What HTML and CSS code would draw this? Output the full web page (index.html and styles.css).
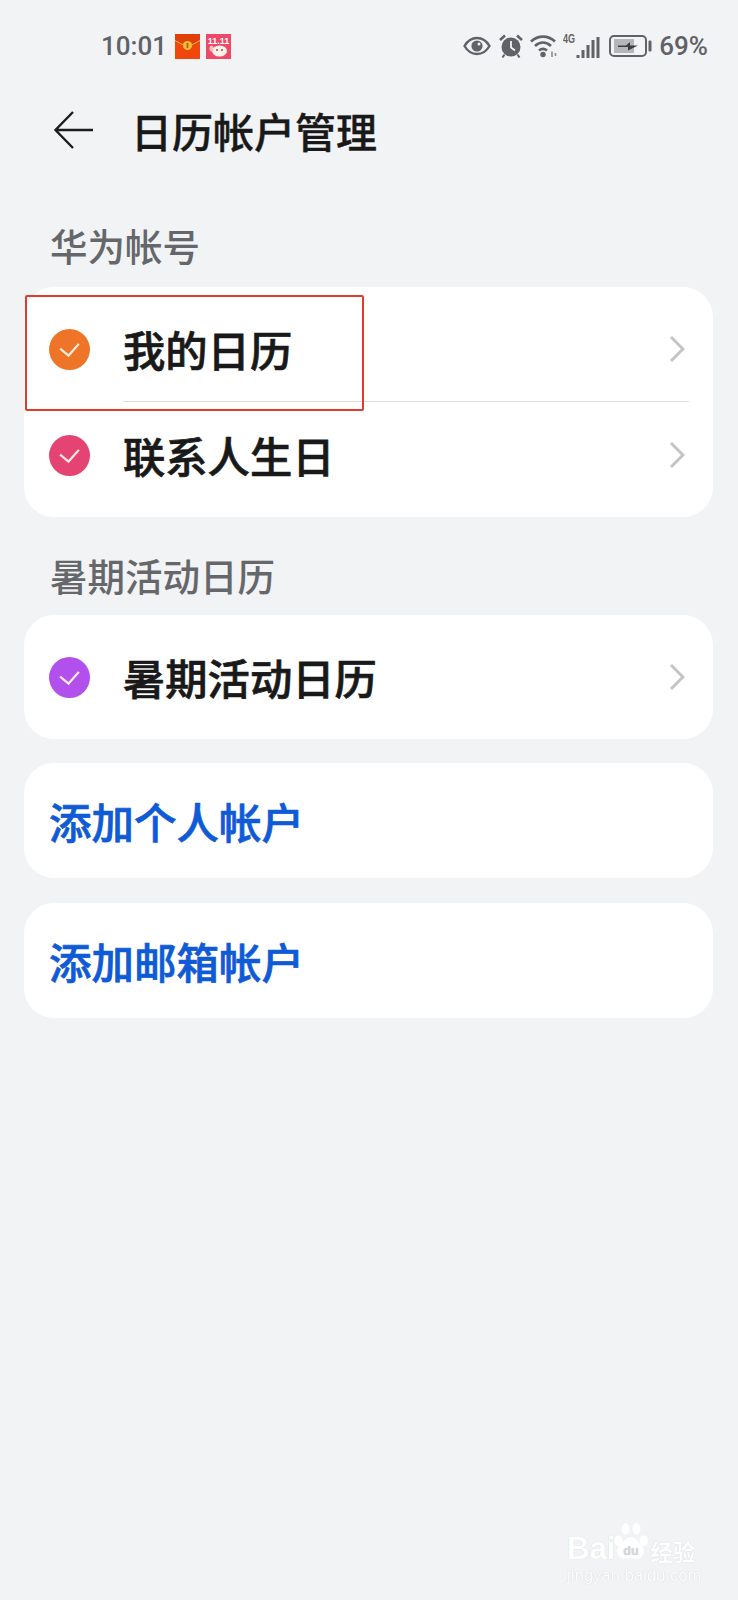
FILE: index.html
```html
<!DOCTYPE html>
<html lang="zh-CN">
<head>
    <meta charset="UTF-8">
    <meta name="viewport" content="width=device-width, initial-scale=1.0">
    <title>日历帐户管理</title>
    <link rel="stylesheet" href="styles.css">
</head>
<body>
    <div class="statusbar">
        <div class="status-left">
            <span class="time">10:01</span>
            <svg class="notif" viewBox="0 0 25 25">
                <rect width="25" height="25" fill="#f0480c"/>
                <path d="M0 0H25V6.500L14 12.500H11L0 6.500Z" fill="#e2400a"/>
                <path d="M0 6.500L11 12.500M25 6.500L14 12.500" fill="none" stroke="#ffb25e" stroke-width="1"/>
                <circle cx="12.500" cy="11.500" r="4.500" fill="#f8bf34"/>
                <rect x="11.600" y="9" width="1.800" height="5" fill="#b4600c"/>
            </svg>
            <svg class="notif" viewBox="0 0 25 25">
                <rect width="25" height="25" fill="#ee4a68"/>
                <text class="notif-text" x="12.500" y="10">11.11</text>
                <ellipse cx="13.500" cy="17" rx="7.500" ry="5.500" fill="#fdf1ea"/>
                <ellipse cx="5.500" cy="14.500" rx="2" ry="3" fill="#f7c5b8"/>
                <circle cx="11" cy="16" r="1" fill="#9a4a3e"/>
                <circle cx="16" cy="16" r="1" fill="#9a4a3e"/>
            </svg>
        </div>
        <div class="status-right">
            <svg class="ic-eye" viewBox="0 0 28 20">
                <path d="M1.500 10C5 4 9 2 14 2s9 2 12.500 8C23 16 19 18 14 18S5 16 1.500 10Z" fill="none" stroke="#5f6266" stroke-width="2.400"/>
                <circle cx="14" cy="10" r="5.600" fill="#5f6266"/>
                <circle cx="16" cy="8" r="1.500" fill="#f2f3f5"/>
            </svg>
            <svg class="ic-alarm" viewBox="0 0 24 24">
                <circle cx="12" cy="13" r="9.500" fill="#5f6266"/>
                <path d="M12 7v6.500l4 3" fill="none" stroke="#f2f3f5" stroke-width="1.800"/>
                <path d="M1 6l5-4.500M23 6l-5-4.500" stroke="#5f6266" stroke-width="2.600"/>
                <path d="M5.500 20.500l-2 3M18.500 20.500l2 3" stroke="#5f6266" stroke-width="2"/>
            </svg>
            <svg class="ic-wifi" viewBox="0 0 28 24">
                <path d="M1 7.500C8 1 18 1 25 7.500M5 12c5-4.500 11-4.500 16 0M9 16.500c3-2.400 5-2.400 8 0" fill="none" stroke="#5f6266" stroke-width="2.600"/>
                <circle cx="13" cy="20.500" r="2.700" fill="#5f6266"/>
                <path d="M22 17.500v5.500M25.500 19v3" stroke="#8a8d90" stroke-width="1.600"/>
            </svg>
            <div class="signal">
                <span class="net">4G</span>
                <svg class="ic-bars" viewBox="0 0 24 24">
                    <path d="M2 20v3M7 15v8M12 10v13M17 5v18M22 2v21" stroke="#5f6266" stroke-width="3"/>
                </svg>
            </div>
            <svg class="ic-batt" viewBox="0 0 44 24">
                <rect x="1" y="2" width="36" height="20" rx="4" fill="none" stroke="#5f6266" stroke-width="2"/>
                <rect x="5" y="5" width="20" height="14" fill="#b4b6b9"/>
                <path d="M9 11.500h8l4-3.500v3.500h8l-10 5v-3.500H9Z" fill="#3c3e41"/>
                <rect x="39.500" y="6.500" width="3" height="11" rx="1.200" fill="#5f6266"/>
            </svg>
            <span class="percent">69%</span>
        </div>
    </div>

    <div class="topbar">
        <svg class="back" viewBox="0 0 42 38">
            <path d="M40 19H3M20 1L2.500 19L20 37" fill="none" stroke="#1c1c1e" stroke-width="2.400"/>
        </svg>
        <h1>日历帐户管理</h1>
    </div>

    <div class="section-label first">华为帐号</div>
    <div class="card double">
        <div class="row">
            <span class="dot orange"><svg viewBox="0 0 24 16"><path d="M2 7L11 14.500L22 2"/></svg></span>
            <span class="row-name">我的日历</span>
            <svg class="chev" viewBox="0 0 16 28"><path d="M2 2l12 12L2 26"/></svg>
        </div>
        <div class="row">
            <span class="dot pink"><svg viewBox="0 0 24 16"><path d="M2 7L11 14.500L22 2"/></svg></span>
            <span class="row-name">联系人生日</span>
            <svg class="chev" viewBox="0 0 16 28"><path d="M2 2l12 12L2 26"/></svg>
        </div>
    </div>

    <div class="section-label">暑期活动日历</div>
    <div class="card">
        <div class="row single">
            <span class="dot purple"><svg viewBox="0 0 24 16"><path d="M2 7L11 14.500L22 2"/></svg></span>
            <span class="row-name">暑期活动日历</span>
            <svg class="chev" viewBox="0 0 16 28"><path d="M2 2l12 12L2 26"/></svg>
        </div>
    </div>

    <div class="card link-card">添加个人帐户</div>
    <div class="card link-card">添加邮箱帐户</div>

    <div class="highlight"></div>

    <div class="watermark">
        <div class="wm-top">
            <span class="wm-bai">Bai</span>
            <svg class="wm-paw" viewBox="0 0 42 44">
                <ellipse cx="7" cy="20" rx="4.500" ry="6" fill="#fff"/>
                <ellipse cx="15" cy="7" rx="4.500" ry="6.500" fill="#fff"/>
                <ellipse cx="27" cy="7" rx="4.500" ry="6.500" fill="#fff"/>
                <ellipse cx="35" cy="20" rx="4.500" ry="6" fill="#fff"/>
                <path d="M21 16c6 0 8 6 12 10 5 6 1 15-6 14-3 0-4-1-6-1s-4 1-7 1c-7 0-11-8-6-14 4-4 7-10 13-10Z" fill="#fff"/>
                <text class="wm-du" x="21" y="36">du</text>
            </svg>
            <span class="wm-cn">经验</span>
        </div>
        <div class="wm-url">jingyan.baidu.com</div>
    </div>
</body>
</html>
```

FILE: styles.css
```css
* {
    box-sizing: border-box;
}
html, body {
    margin: 0;
    height: 1600px;
    overflow: hidden;
}
body {
    position: relative;
    background-color: #f2f3f5;
    font-family: "Noto Sans CJK SC", "Noto Sans", sans-serif;
    color: #191919;
}

/* status bar */
.statusbar {
    height: 90px;
    padding: 33px 30px 0 101px;
    display: flex;
    justify-content: space-between;
    align-items: flex-start;
    color: #5f6266;
}
.status-left {
    display: flex;
    align-items: center;
    gap: 6px;
    height: 26px;
}
.time {
    font-family: Roboto, sans-serif;
    font-size: 26px;
    font-weight: 500;
    margin-right: 2px;
}
.notif {
    width: 25px;
    height: 25px;
}
.notif-text {
    font-family: "Liberation Sans", sans-serif;
    font-size: 9px;
    font-weight: 700;
    fill: #fff;
    text-anchor: middle;
}
.status-right {
    display: flex;
    align-items: center;
    height: 26px;
}
.ic-eye {
    width: 28px;
    height: 20px;
}
.ic-alarm {
    width: 24px;
    height: 24px;
    margin-left: 8px;
}
.ic-wifi {
    width: 28px;
    height: 24px;
    margin-left: 7px;
}
.signal {
    display: flex;
    align-items: flex-end;
    margin-left: 5px;
    height: 26px;
}
.net {
    font-family: "Liberation Sans", sans-serif;
    font-size: 12px;
    font-weight: 700;
    line-height: 12px;
    width: 13px;
    align-self: flex-start;
    transform: scaleX(0.75);
    transform-origin: left top;
}
.ic-bars {
    width: 24px;
    height: 24px;
}
.ic-batt {
    width: 44px;
    height: 24px;
    margin-left: 9px;
}
.percent {
    font-family: Roboto, sans-serif;
    font-size: 26px;
    font-weight: 500;
    margin-left: 6px;
}

/* header */
.topbar {
    height: 80px;
    display: flex;
    align-items: center;
    padding-left: 53px;
}
.back {
    width: 42px;
    height: 38px;
    flex: none;
}
h1 {
    margin: 0 0 0 36px;
    font-size: 41px;
    font-weight: 500;
    line-height: 60px;
    -webkit-text-stroke: 0.4px #191919;
}

/* list */
.section-label {
    margin: 31px 0 0 50px;
    height: 54px;
    font-size: 37.500px;
    font-weight: 500;
    line-height: 54px;
    color: #65676a;
}
.section-label.first {
    margin-top: 48px;
    height: 56px;
}
.section-label + .card {
    margin-top: 13px;
}
.card {
    margin: 24px 25px 0 24px;
    background-color: #fff;
    border-radius: 30px;
}
.card.double {
    padding: 9px 0;
}
.row {
    height: 106px;
    display: flex;
    align-items: center;
    padding: 0 28px 0 25px;
    position: relative;
}
.row.single {
    height: 124px;
}
.row + .row::before {
    content: "";
    position: absolute;
    top: -1px;
    left: 99px;
    right: 24px;
    border-top: 1px solid #dcdcdc;
}
.dot {
    width: 41px;
    height: 41px;
    border-radius: 50%;
    flex: none;
    display: flex;
    align-items: center;
    justify-content: center;
}
.dot svg {
    width: 23px;
    height: 15px;
    fill: none;
    stroke: #fdeadf;
    stroke-width: 2.400;
}
.orange {
    background-color: #ee7528;
}
.pink {
    background-color: #e44373;
}
.purple {
    background-color: #b250ee;
}
.row-name {
    margin-left: 33px;
    flex: 1;
    font-size: 42.300px;
    font-weight: 500;
    line-height: 60px;
    -webkit-text-stroke: 0.7px #191919;
}
.chev {
    width: 16px;
    height: 28px;
    fill: none;
    stroke: #c4c4c4;
    stroke-width: 3;
}
.link-card {
    height: 115px;
    padding-left: 25px;
    font-size: 42.500px;
    font-weight: 500;
    line-height: 115px;
    color: #0f5ad6;
    -webkit-text-stroke: 0.7px #0f5ad6;
}
.link-card + .link-card {
    margin-top: 25px;
}

/* overlays */
.highlight {
    position: absolute;
    left: 25px;
    top: 295px;
    width: 339px;
    height: 116px;
    border: 2px solid #e43a2e;
    border-radius: 2px;
}
.watermark {
    position: absolute;
    left: 567px;
    top: 1518px;
    width: 140px;
    color: #fff;
    text-shadow: 0 0 1px #c8cbcf;
}
.wm-top {
    display: flex;
    align-items: flex-end;
    height: 46px;
}
.wm-bai {
    font-family: "Liberation Sans", sans-serif;
    font-size: 31px;
    font-weight: 700;
    line-height: 30px;
}
.wm-paw {
    width: 38px;
    height: 43px;
    margin-left: -3px;
    flex: none;
}
.wm-du {
    font-family: "Liberation Sans", sans-serif;
    font-size: 14px;
    font-weight: 700;
    fill: #d5d7da;
    text-anchor: middle;
}
.wm-cn {
    font-size: 22.500px;
    font-weight: 700;
    line-height: 26px;
    white-space: nowrap;
}
.wm-url {
    font-family: "Liberation Sans", sans-serif;
    font-size: 16.700px;
    line-height: 18px;
    margin-top: 3px;
    white-space: nowrap;
}
```
